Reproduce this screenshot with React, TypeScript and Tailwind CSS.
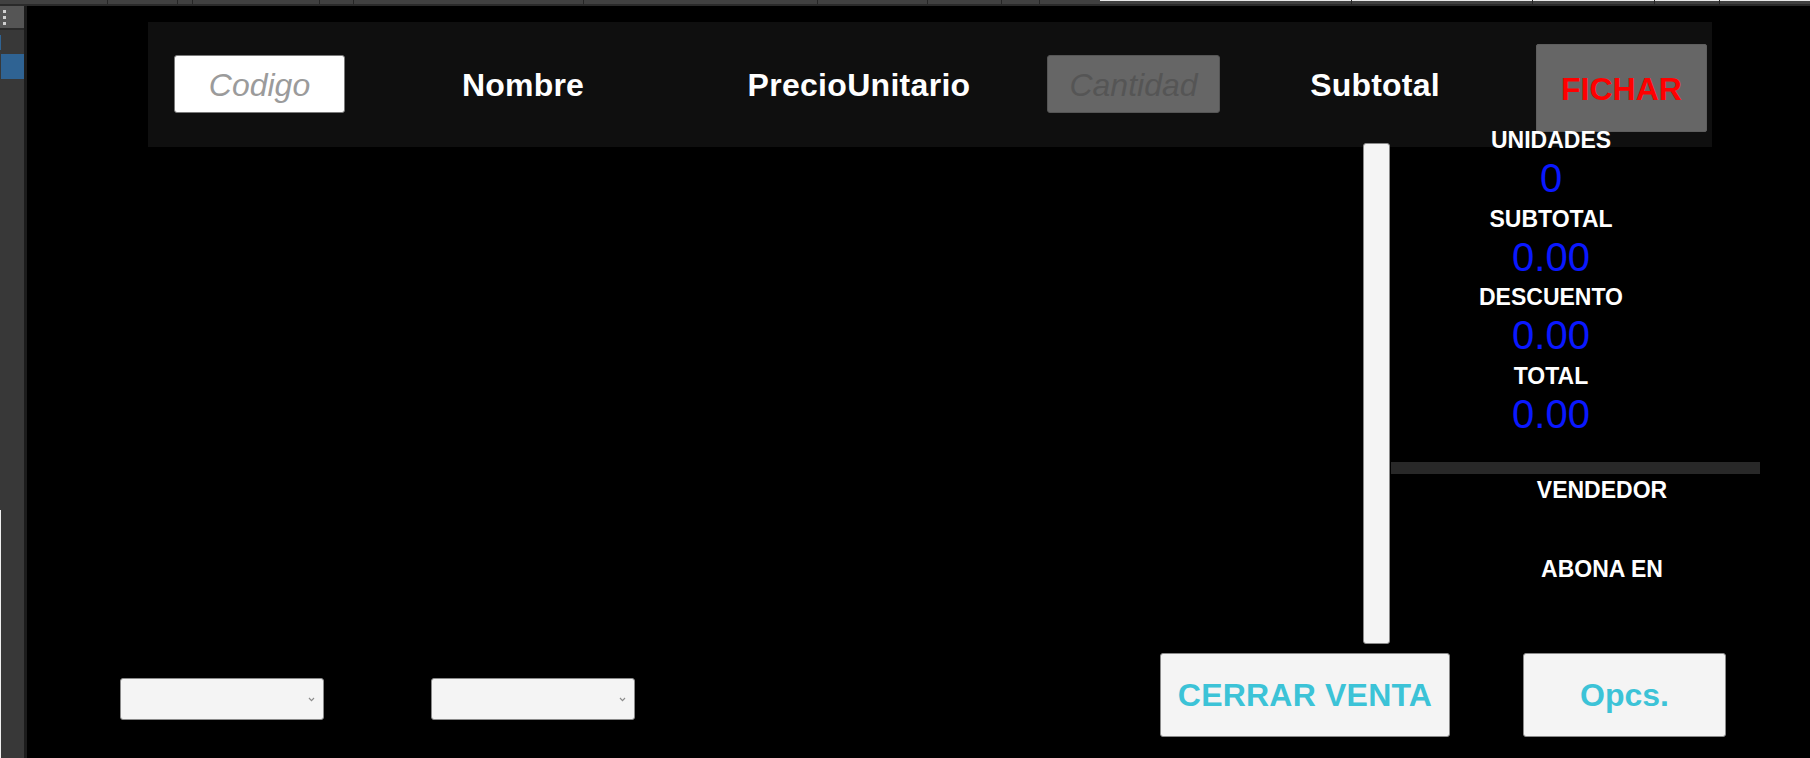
import React from "react";

const ticks = [107, 177, 192, 319, 353, 583, 817, 927, 1001, 1039, 1351, 1532, 1654, 1719];

function Chevron() {
  return (
    <svg width="7" height="5" viewBox="0 0 7 5">
      <path d="M1 1 L3.5 3.6 L6 1" stroke="#8c8c8c" strokeWidth="1.2" fill="none" />
    </svg>
  );
}

function Stat({ label, value, first }: { label: string; value: string; first?: boolean }) {
  return (
    <div className={`flex flex-col items-center ${first ? "" : "mt-[10.5px]"}`}>
      <div className="h-[22px] leading-[22px] text-[23px] font-bold text-white">{label}</div>
      <div className="mt-[8px] h-[38px] leading-[38px] text-[40px] text-[#0a18ff]">{value}</div>
    </div>
  );
}

export default function App() {
  return (
    <div className="w-[1810px] h-[758px] bg-black overflow-hidden flex flex-col font-['Liberation_Sans',Arial,sans-serif]">
      {/* top strip */}
      <div className="h-[6px] shrink-0 flex flex-col">
        <div className="relative h-[4px] flex">
          <div className="w-[1100px] bg-[#414141]" />
          <div className="flex-1 bg-[#414141] border-t border-[#e8e8e8]" />
          {ticks.map((t) => (
            <div key={t} className="absolute top-0 h-[4px] w-[1px] bg-[#262626]" style={{ left: t }} />
          ))}
        </div>
        <div className="h-[2px] bg-[#2a2a2a]" />
      </div>

      <div className="flex flex-1 min-h-0">
        {/* sidebar */}
        <div className="w-[24px] shrink-0 bg-[#383838] flex flex-col">
          <div className="h-[22px] bg-[#555555] flex flex-col pl-[3px] pt-[4px] gap-[3px]">
            <div className="w-[3px] h-[3px] bg-[#d0d0d0]" />
            <div className="w-[3px] h-[3px] bg-[#d0d0d0]" />
            <div className="w-[3px] h-[3px] bg-[#d0d0d0]" />
          </div>
          <div className="h-[2px] bg-[#2a2a2a]" />
          <div className="h-[5px]" />
          <div className="h-[15px] w-[1px] bg-[#2f6393]" />
          <div className="h-[4px]" />
          <div className="h-[25px] ml-[1px] bg-[#2f6393]" />
          <div className="flex-1" />
          <div className="h-[248px] w-[1px] bg-[#f0f0f0]" />
        </div>
        <div className="w-[3px] shrink-0 bg-[#1c1c1c]" />

        {/* main */}
        <div className="flex-1 min-w-0 flex flex-col">
          {/* header panel */}
          <div className="ml-[121px] mt-[16px] w-[1564px] h-[125px] shrink-0 bg-[#0f0f0f] flex items-start pl-[26px]">
            <div className="mt-[33px] w-[171px] h-[58px] bg-white border border-[#7a7a7a] rounded-[3px] flex items-center justify-center">
              <span className="italic text-[32px] leading-[32px] text-[#9b9b9b] pt-[2px]">Codigo</span>
            </div>
            <div className="mt-[33px] w-[356px] h-[58px] flex items-center justify-center">
              <span className="font-bold text-[32px] leading-[32px] text-white pt-[2px] tracking-[0.2px]">Nombre</span>
            </div>
            <div className="mt-[33px] w-[316px] h-[58px] flex items-center justify-center">
              <span className="font-bold text-[32px] leading-[32px] text-white pt-[2px] tracking-[0.3px]">PrecioUnitario</span>
            </div>
            <div className="ml-[30px] mt-[33px] w-[173px] h-[58px] bg-[#666666] border border-[#555555] rounded-[3px] flex items-center justify-center">
              <span className="italic text-[32px] leading-[32px] text-[#555555] pt-[2px]">Cantidad</span>
            </div>
            <div className="mt-[33px] w-[310px] h-[58px] flex items-center justify-center">
              <span className="font-bold text-[32px] leading-[32px] text-white pt-[2px] tracking-[0.2px]">Subtotal</span>
            </div>
            <div className="ml-[6px] mt-[22px] w-[171px] h-[88px] bg-[#666666] border border-[#5e5e5e] rounded-[2px] flex items-center justify-center">
              <span className="font-bold text-[32px] leading-[32px] text-[#ff0000] pt-[1px]">FICHAR</span>
            </div>
          </div>

          {/* middle row */}
          <div className="mt-[-4px] h-[501px] shrink-0 flex">
            <div className="w-[1336px] shrink-0" />
            <div className="w-[27px] shrink-0 h-full bg-[#f4f4f4] border border-[#8a8a8a] rounded-[3px]" />
            <div className="flex-1 min-w-0 flex flex-col">
              <div className="w-[322px] mt-[-14px] flex flex-col">
                <Stat label="UNIDADES" value="0" first />
                <Stat label="SUBTOTAL" value="0.00" />
                <Stat label="DESCUENTO" value="0.00" />
                <Stat label="TOTAL" value="0.00" />
              </div>
              <div className="mt-[29.5px] ml-[1px] w-[369px] h-[12px] bg-[#282828]" />
              <div className="mt-[4.5px] w-[424px] text-center h-[22px] leading-[22px] text-[23px] font-bold text-white">VENDEDOR</div>
              <div className="mt-[57px] w-[424px] text-center h-[22px] leading-[22px] text-[23px] font-bold text-white">ABONA EN</div>
            </div>
          </div>

          {/* bottom row */}
          <div className="flex items-start pl-[93px]">
            <div className="mt-[34px] w-[204px] shrink-0 h-[42px] bg-[#f4f4f4] border border-[#8a8a8a] rounded-[3px] flex items-center justify-end pr-[8px]">
              <Chevron />
            </div>
            <div className="ml-[107px] mt-[34px] w-[204px] shrink-0 h-[42px] bg-[#f4f4f4] border border-[#8a8a8a] rounded-[3px] flex items-center justify-end pr-[8px]">
              <Chevron />
            </div>
            <div className="ml-[525px] mt-[9px] w-[290px] shrink-0 h-[84px] bg-[#f4f4f4] border border-[#8a8a8a] rounded-[3px] flex items-center justify-center">
              <span className="font-bold text-[32px] leading-[32px] text-[#3cc3d7] tracking-[0.2px]">CERRAR VENTA</span>
            </div>
            <div className="ml-[73px] mt-[9px] w-[203px] shrink-0 h-[84px] bg-[#f4f4f4] border border-[#8a8a8a] rounded-[3px] flex items-center justify-center">
              <span className="font-bold text-[32px] leading-[32px] text-[#3cc3d7]">Opcs.</span>
            </div>
          </div>
        </div>
      </div>
    </div>
  );
}
